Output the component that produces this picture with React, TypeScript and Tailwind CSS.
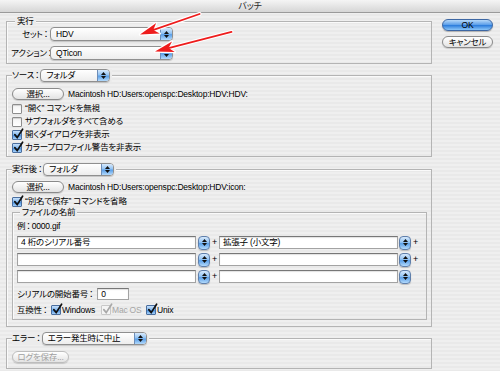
import React from 'react';

function Colon() {
  return <span className="-mx-[1px] inline-block [font-feature-settings:normal]">：</span>;
}

function Arrows() {
  return (
    <span className="flex w-[5px] flex-col items-center gap-[1px]">
      <svg width="5" height="3" viewBox="0 0 5 3">
        <path d="M2.5 0 L5 3 L0 3 Z" fill="#111" />
      </svg>
      <svg width="5" height="3" viewBox="0 0 5 3">
        <path d="M0 0 L5 0 L2.5 3 Z" fill="#111" />
      </svg>
    </span>
  );
}

function Popup({ value, className }: { value: string; className: string }) {
  return (
    <div
      className={`flex shrink-0 items-stretch overflow-hidden rounded-[4px] border border-[#8f8f8f] bg-gradient-to-b from-white to-[#ededed] shadow-[0_1px_1px_rgba(0,0,0,0.18)] ${className}`}
    >
      <span className="flex flex-1 items-center pl-[5px]">{value}</span>
      <span className="flex w-[12px] items-center justify-center border-l border-[#6d8db8] bg-[linear-gradient(180deg,#d7e9fc_0%,#92c3f3_45%,#5b9fe7_55%,#b3dafc_100%)]">
        <Arrows />
      </span>
    </div>
  );
}

function Stepper() {
  return (
    <span className="flex h-[14px] w-[12px] items-center justify-center rounded-[4px] border border-[#5f7fab] bg-[linear-gradient(180deg,#d7e9fc_0%,#92c3f3_45%,#5b9fe7_55%,#b3dafc_100%)] shadow-[0_1px_1px_rgba(0,0,0,0.2)]">
      <Arrows />
    </span>
  );
}

function Field({ value, className }: { value?: string; className: string }) {
  return (
    <div
      className={`flex shrink-0 items-center border border-[#a3a3a3] border-t-[#777] bg-white pl-[3px] shadow-[inset_0_1px_1px_rgba(0,0,0,0.12)] ${className}`}
    >
      {value}
    </div>
  );
}

function Check({ checked, disabled }: { checked?: boolean; disabled?: boolean }) {
  if (!checked) {
    return (
      <span className="h-[10px] w-[10px] shrink-0 rounded-[1px] border border-[#8d8d8d] bg-gradient-to-b from-[#f4f4f4] to-white shadow-[inset_0_1px_1px_rgba(0,0,0,0.15)]" />
    );
  }
  return (
    <span
      className={`relative h-[10px] w-[10px] shrink-0 rounded-[1px] border ${
        disabled
          ? 'border-[#c8c8c8] bg-[#f4f4f4]'
          : 'border-[#4a6e9e] bg-[linear-gradient(180deg,#c6e0fb_0%,#7fb6ee_50%,#4c93e2_55%,#a6d1fa_100%)]'
      }`}
    >
      <svg className="absolute left-[0px] top-[-3px]" width="11" height="12" viewBox="0 0 11 12">
        <path
          d="M1.8 6.6 L4.2 9.6 L9.6 1.2"
          fill="none"
          stroke={disabled ? '#a8a8a8' : '#111'}
          strokeWidth="1.7"
          strokeLinecap="round"
        />
      </svg>
    </span>
  );
}

function PillButton({ label, className, disabled }: { label: string; className: string; disabled?: boolean }) {
  return (
    <div
      className={`flex items-center justify-center rounded-full border bg-gradient-to-b from-white to-[#e3e3e3] shadow-[0_1px_1px_rgba(0,0,0,0.15)] ${
        disabled ? 'border-[#bdbdbd] text-[#a0a0a0]' : 'border-[#8a8a8a] text-black'
      } ${className}`}
    >
      {label}
    </div>
  );
}

function CheckRow({ label, checked }: { label: string; checked?: boolean }) {
  return (
    <div className="flex h-[13px] items-center gap-[3px]">
      <Check checked={checked} />
      <span>{label}</span>
    </div>
  );
}

function FileRow({ left, right, last }: { left?: string; right?: string; last?: boolean }) {
  return (
    <div className="flex h-[13px] items-center">
      <Field value={left} className="h-[13px] w-[179px]" />
      <span className="ml-[2px]">
        <Stepper />
      </span>
      <span className="w-[9px] text-center text-[9px]">+</span>
      <Field value={right} className="h-[13px] w-[179px]" />
      <span className="ml-[1px]">
        <Stepper />
      </span>
      {!last && <span className="w-[9px] text-center text-[9px]">+</span>}
    </div>
  );
}

function RedArrow({ x, y, angle, len }: { x: number; y: number; angle: number; len: number }) {
  return (
    <g transform={`translate(${x} ${y}) rotate(${angle})`}>
      <line x1={-len} y1="0" x2="-12" y2="0" stroke="#fff" strokeWidth="4" strokeLinecap="round" />
      <path d="M0 0 L-19 -5.5 L-14 0 L-19 5.5 Z" fill="#fff" stroke="#fff" strokeWidth="2.5" strokeLinejoin="round" />
      <line x1={-len} y1="0" x2="-12" y2="0" stroke="#ee1c1c" strokeWidth="1.8" strokeLinecap="round" />
      <path d="M0 0 L-19 -5.5 L-14 0 L-19 5.5 Z" fill="#ee1c1c" />
    </g>
  );
}

export default function App() {
  return (
    <div className="relative h-[371px] w-[500px] overflow-hidden bg-[repeating-linear-gradient(180deg,#efefef_0px,#efefef_2px,#e9e9e9_2px,#e9e9e9_4px)] text-[8.5px] leading-none tracking-[-0.2px] text-black [font-family:'Liberation_Sans','Noto_Sans_CJK_JP',sans-serif] [font-feature-settings:'palt']">
      {/* title bar */}
      <div className="flex h-[13px] items-center justify-center border-b border-[#9a9a9a] bg-gradient-to-b from-[#f5f5f5] to-[#d6d6d6] text-[9px] text-[#2a2a2a]">
        バッチ
      </div>

      <div className="flex items-start">
        <div className="ml-[6px] flex w-[426px] flex-col pt-[8px]">
          {/* 実行 */}
          <div className="border border-[#b4b4b4] pb-[3px] pl-[4px] shadow-[inset_1px_1px_0_#fafafa]">
            <div className="-mt-[7px] flex h-[12px] items-center">
              <span className="ml-[4px] bg-[#ececec] px-[2px]">実行</span>
            </div>
            <div className="flex h-[14px] items-center">
              <span className="w-[38px] whitespace-nowrap text-right">
                セット
                <Colon />
              </span>
              <Popup value="HDV" className="ml-[1px] h-[14px] w-[123px]" />
            </div>
            <div className="mt-[5px] flex h-[14px] items-center">
              <span className="w-[38px] whitespace-nowrap text-right">
                アクション
                <Colon />
              </span>
              <Popup value="QTicon" className="ml-[1px] h-[14px] w-[123px]" />
            </div>
          </div>

          {/* ソース */}
          <div className="mt-[11px] border border-[#b4b4b4] pb-[2px] pl-[5px] shadow-[inset_1px_1px_0_#fafafa]">
            <div className="-mt-[7px] flex h-[13px] items-center">
              <div className="flex items-center bg-[#ececec] pr-[2px]">
                <span className="whitespace-nowrap">
                  ソース
                  <Colon />
                </span>
                <Popup value="フォルダ" className="h-[13px] w-[70px]" />
              </div>
            </div>
            <div className="mt-[6px] flex h-[12px] items-center gap-[4px]">
              <PillButton label="選択..." className="h-[12px] w-[52px]" />
              <span>Macintosh HD:Users:openspc:Desktop:HDV:HDV:</span>
            </div>
            <div className="mt-[2px] flex flex-col">
              <CheckRow label="“開く” コマンドを無視" />
              <CheckRow label="サブフォルダをすべて含める" />
              <CheckRow label="開くダイアログを非表示" checked />
              <CheckRow label="カラープロファイル警告を非表示" checked />
            </div>
          </div>

          {/* 実行後 */}
          <div className="mt-[12px] border border-[#b4b4b4] pb-[6px] pl-[5px] shadow-[inset_1px_1px_0_#fafafa]">
            <div className="-mt-[7px] flex h-[13px] items-center">
              <div className="flex items-center bg-[#ececec] pr-[2px]">
                <span className="whitespace-nowrap">
                  実行後
                  <Colon />
                </span>
                <Popup value="フォルダ" className="h-[13px] w-[71px]" />
              </div>
            </div>
            <div className="mt-[5px] flex h-[12px] items-center gap-[4px]">
              <PillButton label="選択..." className="h-[12px] w-[52px]" />
              <span>Macintosh HD:Users:openspc:Desktop:HDV:icon:</span>
            </div>
            <div className="mt-[2px]">
              <CheckRow label="“別名で保存” コマンドを省略" checked />
            </div>

            {/* ファイルの名前 */}
            <div className="mr-[4px] mt-[4px] border border-[#b4b4b4] pb-[3px] pl-[4px] shadow-[inset_1px_1px_0_#fafafa]">
              <div className="-mt-[6px] flex h-[11px] items-center">
                <span className="ml-[3px] bg-[#ececec] px-[2px]">ファイルの名前</span>
              </div>
              <div className="mt-[3px] flex h-[11px] items-center">
                例<Colon />0000.gif
              </div>
              <div className="mt-[4px] flex flex-col gap-[4px]">
                <FileRow left="4 桁のシリアル番号" right="拡張子 (小文字)" />
                <FileRow />
                <FileRow last />
              </div>
              <div className="mt-[5px] flex h-[12px] items-center">
                <span className="whitespace-nowrap">
                  シリアルの開始番号
                  <Colon />
                </span>
                <Field value="0" className="ml-[3px] h-[12px] w-[32px]" />
              </div>
              <div className="mt-[4px] flex h-[12px] items-center">
                <span className="w-[34px] whitespace-nowrap">
                  互換性
                  <Colon />
                </span>
                <Check checked />
                <span className="ml-[1px] w-[39px]">Windows</span>
                <Check checked disabled />
                <span className="ml-[1px] w-[34px] text-[#a6a6a6]">Mac OS</span>
                <Check checked />
                <span className="ml-[1px]">Unix</span>
              </div>
            </div>
          </div>

          {/* エラー */}
          <div className="mt-[11px] border border-[#b4b4b4] pb-[5px] pl-[5px] shadow-[inset_1px_1px_0_#fafafa]">
            <div className="-mt-[7px] flex h-[13px] items-center">
              <div className="flex items-center bg-[#ececec] pr-[2px]">
                <span className="whitespace-nowrap">
                  エラー
                  <Colon />
                </span>
                <Popup value="エラー発生時に中止" className="h-[13px] w-[105px]" />
              </div>
            </div>
            <div className="mt-[6px] flex h-[12px] items-center">
              <PillButton label="ログを保存..." className="h-[12px] w-[57px]" disabled />
            </div>
          </div>
        </div>

        {/* OK / Cancel */}
        <div className="ml-[10px] flex flex-col gap-[5px] pt-[6px]">
          <div className="flex h-[12px] w-[51px] items-center justify-center rounded-full border border-[#3d67a3] bg-[linear-gradient(180deg,#b6d8f8_0%,#5b9ee9_48%,#2f7fdd_55%,#8cc6f8_100%)] shadow-[0_1px_1px_rgba(0,0,0,0.25)]">
            OK
          </div>
          <PillButton label="キャンセル" className="h-[12px] w-[51px]" />
        </div>
      </div>

      {/* annotation arrows */}
      <svg className="pointer-events-none absolute left-0 top-0" width="500" height="371" viewBox="0 0 500 371">
        <RedArrow x={140} y={34.5} angle={161} len={63} />
        <RedArrow x={155} y={51.5} angle={165.6} len={79} />
      </svg>
    </div>
  );
}
